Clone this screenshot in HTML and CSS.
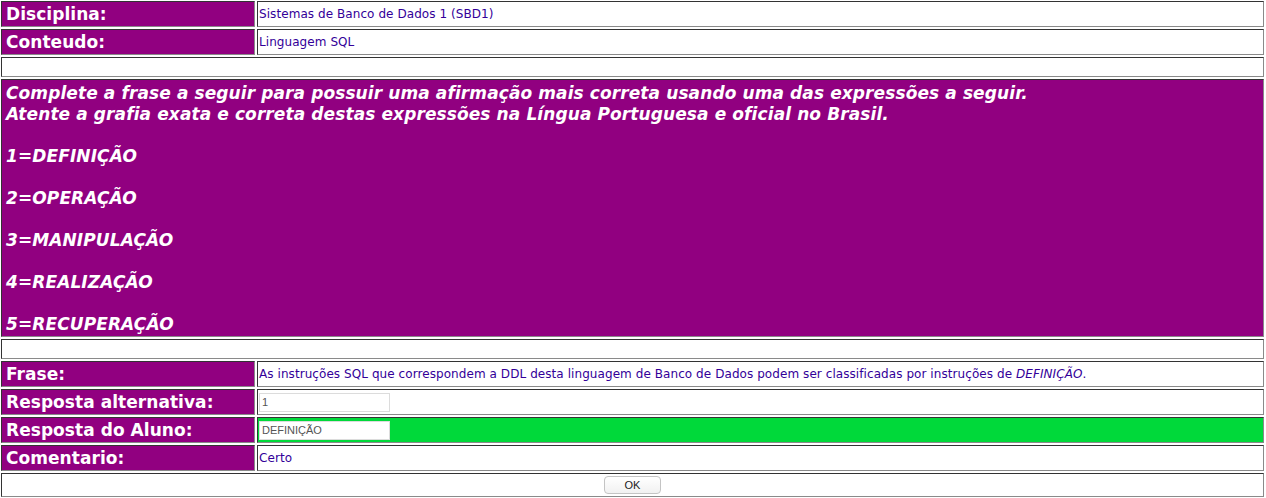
FILE: index.html
```html
<!DOCTYPE html>
<html lang="pt-BR">
<head>
<meta charset="utf-8">
<title>Exercício</title>
<link rel="stylesheet" href="styles.css">
</head>
<body>
<form class="sheet">
  <div class="cell label row">Disciplina:</div>
  <div class="cell value row"><span>Sistemas de Banco de Dados 1 (SBD1)</span></div>

  <div class="cell label row">Conteudo:</div>
  <div class="cell value row"><span>Linguagem SQL</span></div>

  <div class="cell blank full"></div>

  <div class="cell statement full">
    <p>Complete a frase a seguir para possuir uma afirmação mais correta usando uma das expressões a seguir.<br>Atente a grafia exata e correta destas expressões na Língua Portuguesa e oficial no Brasil.</p>
    <p>1=DEFINIÇÃO</p>
    <p>2=OPERAÇÃO</p>
    <p>3=MANIPULAÇÃO</p>
    <p>4=REALIZAÇÃO</p>
    <p>5=RECUPERAÇÃO</p>
  </div>

  <div class="cell blank full"></div>

  <div class="cell label row">Frase:</div>
  <div class="cell value row"><span>As instruções SQL que correspondem a DDL desta linguagem de Banco de Dados podem ser classificadas por instruções de <em>DEFINIÇÃO</em>.</span></div>

  <div class="cell label row">Resposta alternativa:</div>
  <div class="cell value row"><input class="field" type="text" value="1" readonly></div>

  <div class="cell label row">Resposta do Aluno:</div>
  <div class="cell value row correct"><input class="field answer" type="text" value="DEFINIÇÃO" readonly></div>

  <div class="cell label row">Comentario:</div>
  <div class="cell value row"><span>Certo</span></div>

  <div class="cell actions full"><button class="ok" type="button">OK</button></div>
</form>
</body>
</html>
```

FILE: styles.css
```css
html, body {
  margin: 0;
  padding: 0;
  background: #ffffff;
  overflow: hidden;
}

.sheet {
  box-sizing: border-box;
  width: 1269px;
  margin: -2px 0 0 -2px;
  padding: 2px;
  border: 1px solid;
  border-color: #c8c8c8 #444444 #444444 #c8c8c8;
  display: grid;
  grid-template-columns: 254px 1fr;
  gap: 2px;
  font-family: "DejaVu Sans", Verdana, sans-serif;
}

.cell {
  box-sizing: border-box;
  border: 1px solid;
  border-color: #333333 #8a8a8a #8a8a8a #333333;
  background: #ffffff;
  display: flex;
  align-items: center;
  padding: 0 1px;
}

.full {
  grid-column: 1 / -1;
}

.row {
  height: 26px;
}

.label {
  background: #910080;
  color: #ffffff;
  font-weight: bold;
  font-size: 17px;
  padding-left: 4px;
  letter-spacing: 0.05px;
}

.value {
  color: #330099;
  font-size: 12px;
  letter-spacing: 0.07px;
}

.value em {
  font-style: italic;
}

.correct {
  background: #00d93a;
}

.blank {
  height: 20px;
}

.statement {
  display: block;
  height: 258px;
  background: #910080;
  color: #ffffff;
  font-weight: bold;
  font-style: italic;
  font-size: 17px;
  line-height: 21px;
  letter-spacing: 0.1px;
  padding: 3px 4px;
}

.statement p {
  margin: 0 0 21px 0;
}

.statement p:last-child {
  margin-bottom: 0;
}

.field {
  box-sizing: border-box;
  width: 131px;
  height: 19px;
  margin: 0;
  padding: 0 2px;
  border: 1px solid #dcdcdc;
  background: #ffffff;
  color: #555555;
  font-family: "Liberation Sans", Arial, sans-serif;
  font-size: 11px;
  letter-spacing: 0;
  outline: none;
}

.actions {
  height: 24px;
  justify-content: center;
}

.ok {
  box-sizing: border-box;
  width: 57px;
  height: 18px;
  padding: 0;
  border: 1px solid #c4c4c4;
  border-radius: 4px;
  background: linear-gradient(#ffffff, #f1f1f1);
  color: #222222;
  font-family: "Liberation Sans", Arial, sans-serif;
  font-size: 11px;
}
```
